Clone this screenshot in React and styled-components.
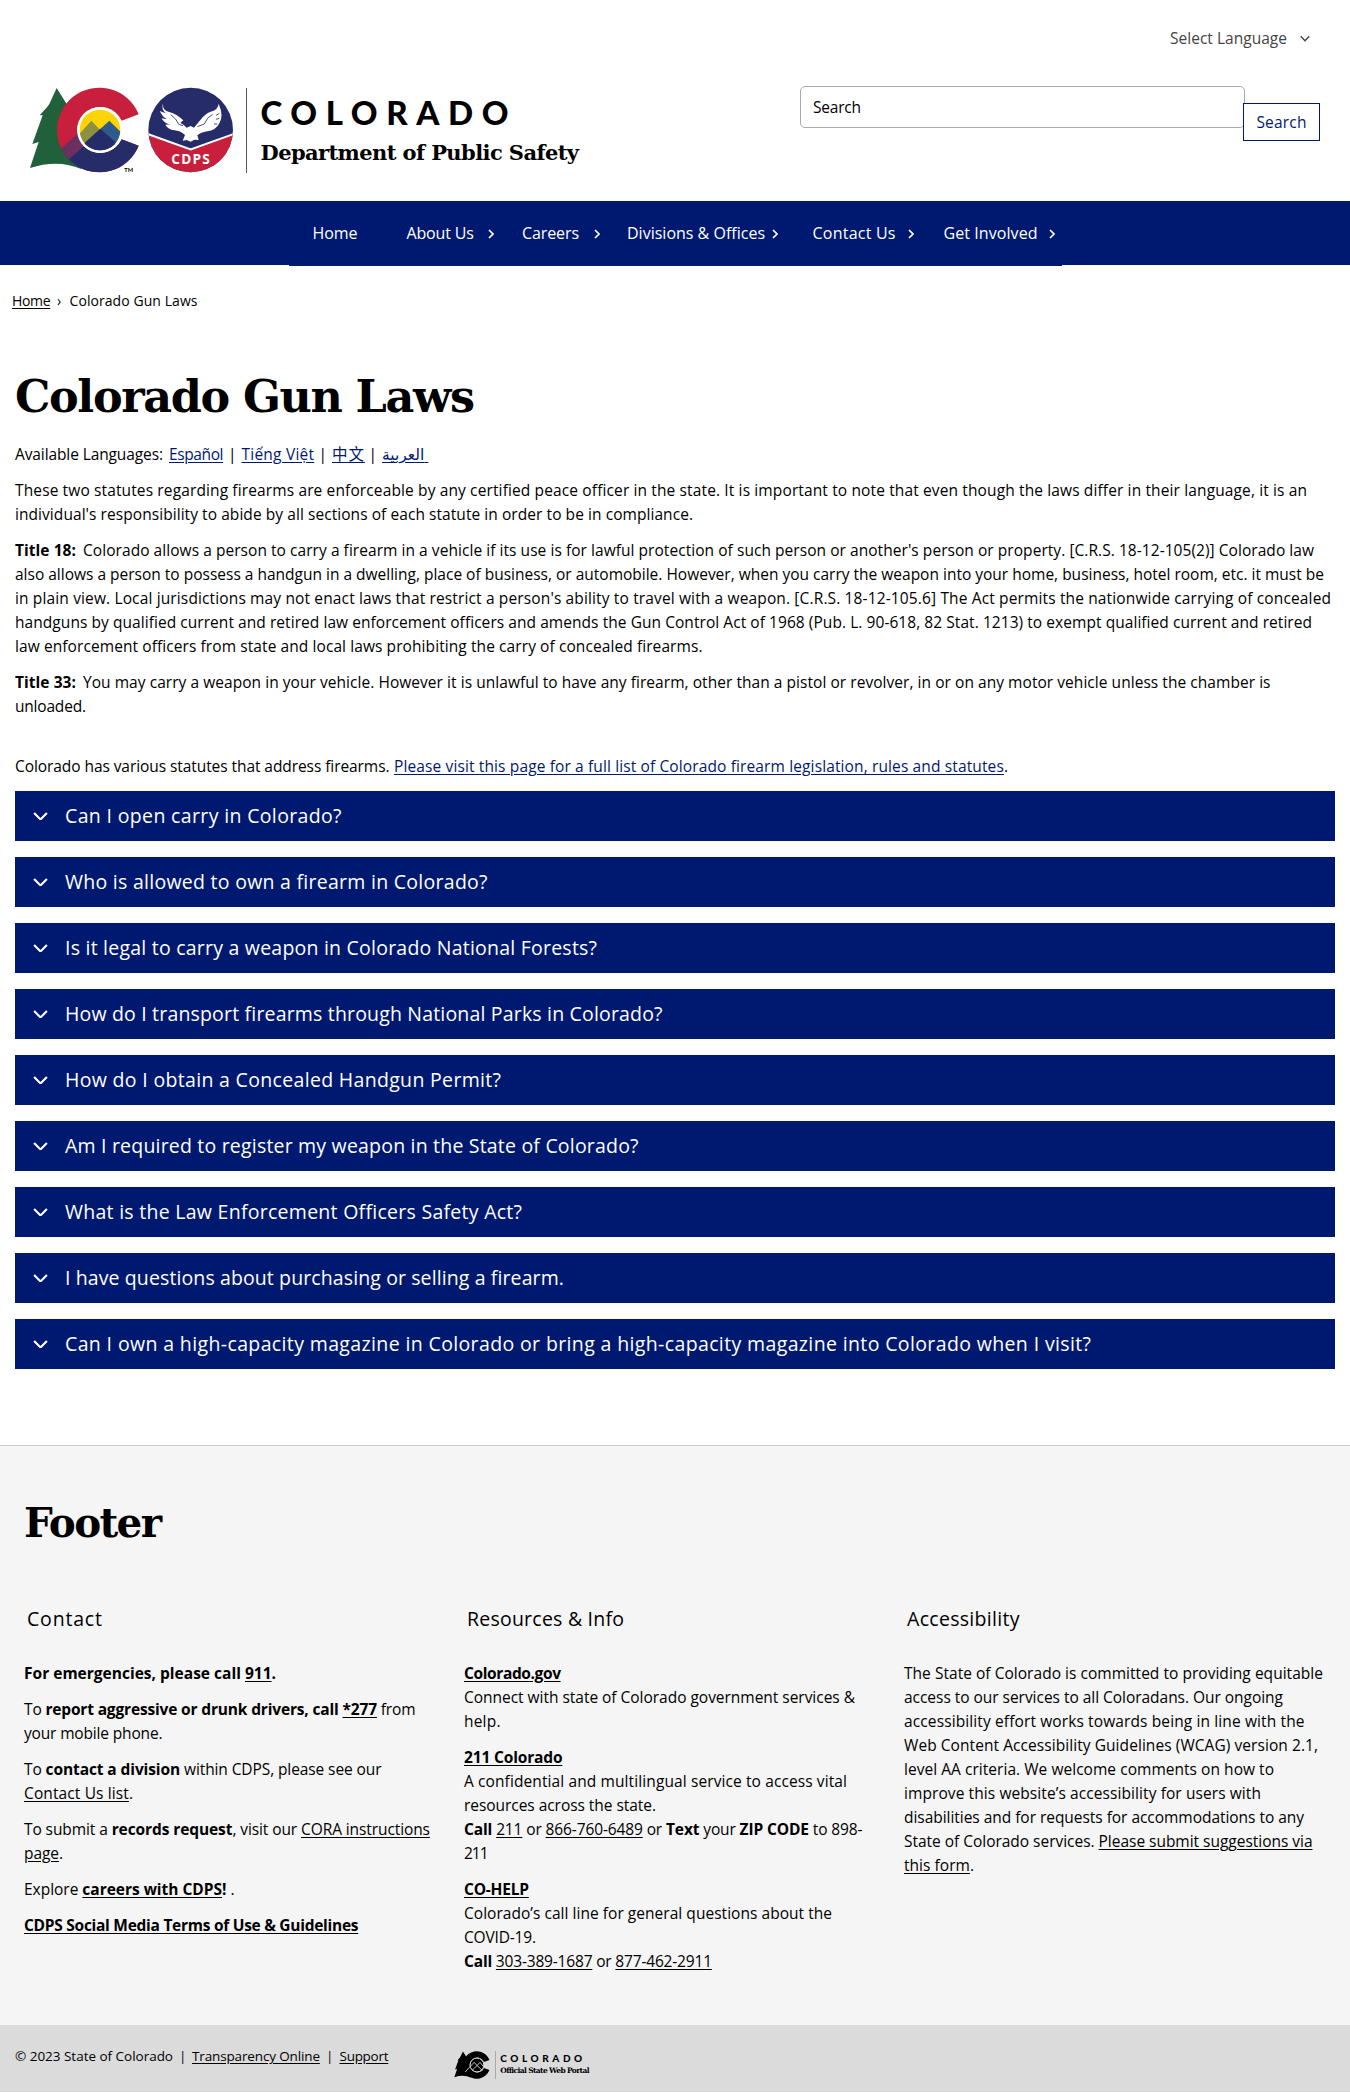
import React, { useLayoutEffect, useRef } from "react";
import styled, { createGlobalStyle } from "styled-components";

const BODY = '"Open Sans", "Noto Sans", "Noto Sans CJK SC", "DejaVu Sans", sans-serif';
const SANS = '"Open Sans", sans-serif';
const DISPLAY = 'Lato, "Open Sans", sans-serif';
const SLAB = '"DejaVu Serif", serif';
const NAVY = "#001970";

const GlobalStyle = createGlobalStyle`
  * { box-sizing: border-box; }
  body {
    margin: 0;
    background: #fff;
    color: #000;
    font: 15.5px/24px ${BODY};
  }
  a { color: inherit; text-decoration: underline; text-underline-offset: 2px; }
  b { font-weight: 700; }
`;

/* One line of text, tracked so that it spans the given measure. */
const LineText = styled.span`
  display: block;
  width: max-content;
  white-space: pre;
`;

function Line({ w, children, ...rest }) {
  const ref = useRef(null);
  useLayoutEffect(() => {
    const el = ref.current;
    el.style.letterSpacing = "0px";
    const natural = el.getBoundingClientRect().width;
    el.style.letterSpacing = `${(w - natural) / (el.textContent.length - 1 || 1)}px`;
  }, [w]);
  return (
    <LineText ref={ref} {...rest}>
      {children}
    </LineText>
  );
}

/* ---------- header ---------- */
const Header = styled.header`
  height: 201px;
`;
const TopBar = styled.div`
  display: flex;
  justify-content: flex-end;
  align-items: center;
  gap: 13px;
  height: 80px;
  padding: 0 40px 4px 0;
  color: #444;
`;
const HeaderRow = styled.div`
  display: flex;
  justify-content: space-between;
  padding: 0 30px 0 20px;
`;
const Brand = styled.div`
  display: flex;
`;
const BrandText = styled.div`
  margin: 8px 0 0 -4px;
  padding: 8px 0 0 13.5px;
  height: 85px;
  border-left: 1.5px solid #555;
`;
const BrandName = styled.div`
  font: 900 33px/32px ${DISPLAY};
`;
const BrandDept = styled.div`
  margin-top: 10px;
  font: bold 21px/30px ${SLAB};
`;
const SearchForm = styled.form`
  display: flex;
  padding-top: 6px;
`;
const SearchField = styled.div`
  width: 445px;
  height: 42px;
  padding: 8px 12px;
  border: 1px solid #aaa;
  border-radius: 5px;
`;
const SearchButton = styled.button`
  display: flex;
  justify-content: center;
  align-items: center;
  width: 77px;
  height: 38px;
  margin: 17px 0 0 -2px;
  padding: 0;
  border: 1px solid ${NAVY};
  background: #fff;
  color: ${NAVY};
  font: inherit;
`;

/* ---------- navigation ---------- */
const Nav = styled.nav`
  display: flex;
  justify-content: center;
  height: 64px;
  background: ${NAVY};
`;
const NavList = styled.div`
  display: flex;
  width: 773px;
  height: 65px;
  padding: 0 0 0 24px;
  background: ${NAVY};
`;
const NavItem = styled.div`
  display: flex;
  justify-content: space-between;
  flex: none;
  width: ${(p) => p.$w}px;
  margin-right: ${(p) => p.$gap}px;
  padding-top: 20px;
  color: #fff;
  font: 400 16px/24px ${SANS};
  svg { margin-top: 8px; }
`;

/* ---------- content ---------- */
const Breadcrumb = styled.div`
  display: flex;
  padding: 24px 0 0 12px;
  font-size: 14px;
`;
const Crumb = styled.span`
  width: ${(p) => p.$w}px;
`;
const Main = styled.main`
  padding: 53px 15px 76px;
`;
const Title = styled.h1`
  margin: 0;
  height: 76px;
  font: bold 44.5px/60px ${SLAB};
`;
const Paragraph = styled.p`
  margin: 0 0 ${(p) => p.$after ?? 12}px;
`;
const SplitParagraph = styled(Paragraph)`
  display: flex;
`;
const Lead = styled.b`
  margin-right: 3px;
`;
const Languages = styled.div`
  display: flex;
  height: 36px;
  a { color: ${NAVY}; }
`;
const Slot = styled.span`
  width: ${(p) => p.$w}px;
`;
const Blue = styled.a`
  && { color: ${NAVY}; }
`;
const Accordion = styled.div`
  display: flex;
  flex-direction: column;
  gap: 16px;
`;
const AccordionRow = styled.div`
  display: flex;
  align-items: center;
  gap: 17px;
  height: 50px;
  padding: 0 18px;
  background: ${NAVY};
  color: #fff;
  font: 400 19.5px/26px ${SANS};
`;

/* ---------- footer ---------- */
const Footer = styled.footer`
  height: 580px;
  padding: 47px 24px 0;
  border-top: 1px solid #ccc;
  background: #f5f5f5;
`;
const FooterTitle = styled.h2`
  margin: 0;
  font: bold 40.5px/60px ${SLAB};
`;
const Columns = styled.div`
  display: grid;
  grid-template-columns: 440px 440px 1fr;
  padding-top: 53px;
`;
const ColumnTitle = styled.h3`
  margin: 0 0 29px 3px;
  font: 400 19.5px/26px ${SANS};
`;
const Bottom = styled.div`
  display: flex;
  height: 67px;
  padding: 19px 0 0 15px;
  background: #dbdbdb;
  font-size: 13.5px;
`;
const Portal = styled.div`
  display: flex;
  margin: 7px 0 0 66px;
`;
const PortalText = styled.div`
  margin-left: 5px;
  padding-left: 4px;
  border-left: 1px solid #aaa;
  height: 28px;
`;
const PortalName = styled.div`
  font: 900 10px/14px ${DISPLAY};
`;
const PortalTag = styled.div`
  font: bold 7.5px/12px ${SLAB};
`;

const Chevron = ({ w = 14, h = 8, stroke = "#fff" }) => (
  <svg width={w} height={h} viewBox="0 0 14 8" fill="none" stroke={stroke} strokeWidth="2">
    <path d="M1 1l6 6 6-6" />
  </svg>
);
const Caret = () => (
  <svg width="6" height="10" viewBox="0 0 6 10" fill="none" stroke="#fff" strokeWidth="1.7">
    <path d="M1 1l4 4-4 4" />
  </svg>
);

const C_SHAPE =
  "M356 103A127 127 0 1 0 356 197L305 178A69 69 0 1 1 305 122Z";

function Logo() {
  return (
    <svg width="230" height="100" viewBox="0 0 690 300">
      <defs>
        <clipPath id="c"><path d={C_SHAPE} /></clipPath>
        <clipPath id="sun"><circle cx="240" cy="150" r="61" /></clipPath>
        <clipPath id="seal"><circle cx="512" cy="150" r="127" /></clipPath>
      </defs>
      <path
        fill="#20603a"
        d="M110 24L145 80L150 110L180 258L186 268Q115 236 30 264L56 186L37 192L68 106H59L81 82L88 72Z"
      />
      <path fill="#c8203c" d={C_SHAPE} />
      <g clipPath="url(#c)">
        <path fill="#252c68" d="M110 240L200 160L300 178H380V290H110Z" />
        <path fill="#6c3060" d="M110 218L190 145V200L140 244H110Z" />
      </g>
      <circle cx="240" cy="150" r="69" fill="#fff" />
      <g clipPath="url(#sun)">
        <rect x="170" y="80" width="140" height="140" fill="#fcd408" />
        <path fill="#8b913f" d="M160 182L214 122L260 170L220 220H160Z" />
        <path fill="#2f5b8c" d="M220 166L268 122L320 174V220H220Z" />
        <path fill="#5e7468" d="M241 146L262 168L241 190L222 168Z" />
        <path fill="#252c68" d="M160 220L186 196L241 146L306 204V222H160Z" />
      </g>
      <text x="313" y="277" fontFamily="Lato" fontWeight="700" fontSize="17">TM</text>

      <circle cx="512" cy="150" r="127" fill="#252c68" />
      <g clipPath="url(#seal)">
        <path fill="#c8203c" d="M380 162L512 210L644 162V290H380Z" />
        <path fill="none" stroke="#fff" strokeWidth="6" d="M380 161L512 208L644 161" />
      </g>
      <path
        fill="#fff"
        d="M429 71Q427 92 448 96Q470 102 490 121L481 128Q492 134 500 143L512 138L522 143Q533 130 548 112Q562 96 581 92Q594 86 596 71Q612 108 598 130Q588 151 562 154Q542 157 532 166L536 180L523 179L512 185L500 180L488 182L495 165Q480 152 463 151Q444 148 436 134Q443 133 450 134Q430 128 425 115Q432 117 441 117Q424 108 420 93Q428 98 437 99Q423 88 429 71Z"
      />
      <path
        fill="none"
        stroke="#252c68"
        strokeWidth="2.5"
        d="M452 104Q470 116 476 133L489 137M578 103Q560 112 553 132L532 140M598 100L588 106M598 115L588 118M592 132L582 132"
      />
      <text x="454" y="251" fill="#fff" fontFamily="Open Sans" fontWeight="700" fontSize="41" textLength="115">
        CDPS
      </text>
    </svg>
  );
}

function MiniLogo() {
  return (
    <svg width="36" height="28" viewBox="28 20 332 260">
      <path d="M110 24L145 80L180 258L186 268Q115 236 30 264L56 186L37 192L68 106H59L81 82Z" />
      <path d={C_SHAPE} />
      <circle cx="240" cy="150" r="64" stroke="#dbdbdb" strokeWidth="9" />
      <path
        d="M130 215L214 125L241 155L268 125L300 165M195 200L241 155L290 200"
        fill="none"
        stroke="#dbdbdb"
        strokeWidth="8"
      />
    </svg>
  );
}

const nav = [
  { label: "Home", text: 45, w: 45, gap: 49 },
  { label: "About Us", text: 67.5, w: 87, gap: 28.5, caret: true },
  { label: "Careers", text: 57, w: 78, gap: 27, caret: true },
  { label: "Divisions & Offices", text: 138, w: 150.5, gap: 35, caret: true },
  { label: "Contact Us", text: 83, w: 101, gap: 30, caret: true },
  { label: "Get Involved", text: 94, w: 111, gap: 0, caret: true },
];

const questions = [
  ["Can I open carry in Colorado?", 276.5],
  ["Who is allowed to own a firearm in Colorado?", 422.5],
  ["Is it legal to carry a weapon in Colorado National Forests?", 532],
  ["How do I transport firearms through National Parks in Colorado?", 597.5],
  ["How do I obtain a Concealed Handgun Permit?", 436],
  ["Am I required to register my weapon in the State of Colorado?", 573.5],
  ["What is the Law Enforcement Officers Safety Act?", 457],
  ["I have questions about purchasing or selling a firearm.", 499],
  ["Can I own a high-capacity magazine in Colorado or bring a high-capacity magazine into Colorado when I visit?", 1026],
];

export default function App() {
  return (
    <>
      <GlobalStyle />
      <Header>
        <TopBar>
          <Line w={117}>Select Language</Line>
          <Chevron w={10} h={7} stroke="#444" />
        </TopBar>
        <HeaderRow>
          <Brand>
            <Logo />
            <BrandText>
              <BrandName><Line w={248}>COLORADO</Line></BrandName>
              <BrandDept><Line w={318.5}>Department of Public Safety</Line></BrandDept>
            </BrandText>
          </Brand>
          <SearchForm>
            <SearchField><Line w={48}>Search</Line></SearchField>
            <SearchButton type="button"><Line w={50}>Search</Line></SearchButton>
          </SearchForm>
        </HeaderRow>
      </Header>

      <Nav>
        <NavList>
          {nav.map((n) => (
            <NavItem key={n.label} $w={n.w} $gap={n.gap}>
              <Line w={n.text}>{n.label}</Line>
              {n.caret && <Caret />}
            </NavItem>
          ))}
        </NavList>
      </Nav>

      <Breadcrumb>
        <Crumb $w={45}><Line w={38.5}><a href="#home">Home</a></Line></Crumb>
        <Crumb $w={12.5}>›</Crumb>
        <Line w={128}>Colorado Gun Laws</Line>
      </Breadcrumb>

      <Main>
        <Title><Line w={460}>Colorado Gun Laws</Line></Title>
        <Languages>
          <Slot $w={154}><Line w={148}>Available Languages:</Line></Slot>
          <Slot $w={59}><Line w={54.5}><a href="#es">Español</a></Line></Slot>
          <Slot $w={13.5}>|</Slot>
          <Slot $w={77}><Line w={72.5}><a href="#vi">Tiếng Việt</a></Line></Slot>
          <Slot $w={13.5}>|</Slot>
          <Slot $w={36.5}><Line w={32}><a href="#zh">中文</a></Line></Slot>
          <Slot $w={13.5}>|</Slot>
          <Line w={39}><a href="#ar">العربية&nbsp;</a></Line>
        </Languages>
        <Paragraph>
          <Line w={1292}>These two statutes regarding firearms are enforceable by any certified peace officer in the state. It is important to note that even though the laws differ in their language, it is an</Line>
          <Line w={678}>individual's responsibility to abide by all sections of each statute in order to be in compliance.</Line>
        </Paragraph>
        <Paragraph>
          <Line w={1299}><Lead>Title 18:</Lead> Colorado allows a person to carry a firearm in a vehicle if its use is for lawful protection of such person or another's person or property. [C.R.S. 18-12-105(2)] Colorado law</Line>
          <Line w={1309}>also allows a person to possess a handgun in a dwelling, place of business, or automobile. However, when you carry the weapon into your home, business, hotel room, etc. it must be</Line>
          <Line w={1316}>in plain view. Local jurisdictions may not enact laws that restrict a person's ability to travel with a weapon. [C.R.S. 18-12-105.6] The Act permits the nationwide carrying of concealed</Line>
          <Line w={1297}>handguns by qualified current and retired law enforcement officers and amends the Gun Control Act of 1968 (Pub. L. 90-618, 82 Stat. 1213) to exempt qualified current and retired</Line>
          <Line w={687.5}>law enforcement officers from state and local laws prohibiting the carry of concealed firearms.</Line>
        </Paragraph>
        <Paragraph $after={36}>
          <Line w={1255.5}><Lead>Title 33:</Lead> You may carry a weapon in your vehicle. However it is unlawful to have any firearm, other than a pistol or revolver, in or on any motor vehicle unless the chamber is</Line>
          <Line w={71}>unloaded.</Line>
        </Paragraph>
        <SplitParagraph $after={13}>
          <Slot $w={379}><Line w={378.5}>Colorado has various statutes that address firearms. </Line></Slot>
          <Line w={614}><Blue href="#statutes">Please visit this page for a full list of Colorado firearm legislation, rules and statutes</Blue>.</Line>
        </SplitParagraph>
        <Accordion>
          {questions.map(([q, w]) => (
            <AccordionRow key={q}>
              <Chevron w={15} h={8.5} />
              <Line w={w}>{q}</Line>
            </AccordionRow>
          ))}
        </Accordion>
      </Main>

      <Footer>
        <FooterTitle><Line w={138}>Footer</Line></FooterTitle>
        <Columns>
          <section>
            <ColumnTitle><Line w={75}>Contact</Line></ColumnTitle>
            <Paragraph><Line w={252}><b>For emergencies, please call <a href="#911">911</a>.</b></Line></Paragraph>
            <Paragraph>
              <Line w={391.5}>To <b>report aggressive or drunk drivers, call <a href="#277">*277</a></b> from</Line>
              <Line w={138.5}>your mobile phone.</Line>
            </Paragraph>
            <Paragraph>
              <Line w={357.5}>To <b>contact a division</b> within CDPS, please see our</Line>
              <Line w={109}><a href="#contact">Contact Us list</a>.</Line>
            </Paragraph>
            <Paragraph>
              <Line w={406}>To submit a <b>records request</b>, visit our <a href="#cora">CORA instructions</a></Line>
              <Line w={39}><a href="#cora">page</a>.</Line>
            </Paragraph>
            <Paragraph><Line w={210.5}>Explore <b><a href="#careers">careers with CDPS</a>!</b> .</Line></Paragraph>
            <Paragraph><Line w={334.5}><b><a href="#social">CDPS Social Media Terms of Use &amp; Guidelines</a></b></Line></Paragraph>
          </section>
          <section>
            <ColumnTitle><Line w={157}>Resources &amp; Info</Line></ColumnTitle>
            <Paragraph>
              <Line w={97}><b><a href="#gov">Colorado.gov</a></b></Line>
              <Line w={391}>Connect with state of Colorado government services &amp;</Line>
              <Line w={36.5}>help.</Line>
            </Paragraph>
            <Paragraph>
              <Line w={98.5}><b><a href="#211">211 Colorado</a></b></Line>
              <Line w={383}>A confidential and multilingual service to access vital</Line>
              <Line w={192}>resources across the state.</Line>
              <Line w={398.5}><b>Call</b> <a href="#t211">211</a> or <a href="#t866">866-760-6489</a> or <b>Text</b> your <b>ZIP CODE</b> to 898-</Line>
              <Line w={24.5}>211</Line>
            </Paragraph>
            <Paragraph>
              <Line w={65}><b><a href="#cohelp">CO-HELP</a></b></Line>
              <Line w={368}>Colorado’s call line for general questions about the</Line>
              <Line w={72}>COVID-19.</Line>
              <Line w={248}><b>Call</b> <a href="#t303">303-389-1687</a> or <a href="#t877">877-462-2911</a></Line>
            </Paragraph>
          </section>
          <section>
            <ColumnTitle><Line w={112.5}>Accessibility</Line></ColumnTitle>
            <Paragraph>
              <Line w={419}>The State of Colorado is committed to providing equitable</Line>
              <Line w={379}>access to our services to all Coloradans. Our ongoing</Line>
              <Line w={400.5}>accessibility effort works towards being in line with the</Line>
              <Line w={414}>Web Content Accessibility Guidelines (WCAG) version 2.1,</Line>
              <Line w={370}>level AA criteria. We welcome comments on how to</Line>
              <Line w={357}>improve this website’s accessibility for users with</Line>
              <Line w={400}>disabilities and for requests for accommodations to any</Line>
              <Line w={408.5}>State of Colorado services. <a href="#form">Please submit suggestions via</a></Line>
              <Line w={70}><a href="#form">this form</a>.</Line>
            </Paragraph>
          </section>
        </Columns>
      </Footer>
      <Bottom>
        <Slot $w={164}><Line w={158}>© 2023 State of Colorado</Line></Slot>
        <Slot $w={13}>|</Slot>
        <Slot $w={134}><Line w={128}><a href="#transparency">Transparency Online</a></Line></Slot>
        <Slot $w={13.5}>|</Slot>
        <Line w={49}><a href="#support">Support</a></Line>
        <Portal>
          <MiniLogo />
          <PortalText>
            <PortalName><Line w={82}>COLORADO</Line></PortalName>
            <PortalTag><Line w={89}>Official State Web Portal</Line></PortalTag>
          </PortalText>
        </Portal>
      </Bottom>
    </>
  );
}
